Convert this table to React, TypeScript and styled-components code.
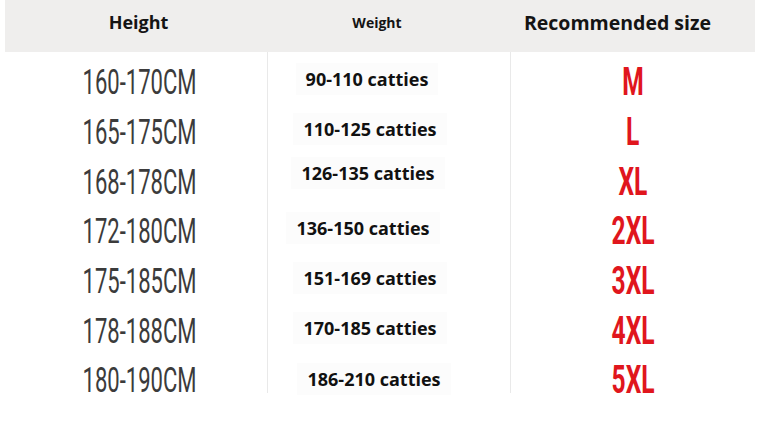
import React from "react";
import styled, { createGlobalStyle } from "styled-components";

const GlobalStyle = createGlobalStyle`
  html, body { margin: 0; padding: 0; background: #ffffff; }
  * { box-sizing: border-box; }
`;

const Page = styled.div`
  width: 760px;
  height: 423px;
  padding: 0 5px;
  background: #ffffff;
  overflow: hidden;
`;

const HeaderBar = styled.div`
  display: grid;
  grid-template-columns: 262px 244px 244px;
  height: 52px;
  background: #efeeed;
`;

const HeadCell = styled.div<{ $size: number; $offset: number }>`
  display: flex;
  align-items: center;
  justify-content: center;
  padding-bottom: 8px;
  padding-left: ${(p) => Math.max(0, p.$offset * 2)}px;
  padding-right: ${(p) => Math.max(0, -p.$offset * 2)}px;
  font-family: "Open Sans", "Liberation Sans", sans-serif;
  font-weight: 700;
  font-size: ${(p) => p.$size}px;
  color: #141414;
  white-space: nowrap;
`;

const Body = styled.div`
  display: grid;
  grid-template-columns: 262px 244px 244px;
  grid-template-rows: 341px;
`;

const Column = styled.div<{ $divided?: boolean }>`
  display: flex;
  flex-direction: column;
  height: 100%;
  min-height: 0;
  padding-top: 6px;
  border-left: ${(p) => (p.$divided ? "1px solid #e9e9e9" : "none")};
  border-right: ${(p) => (p.$divided ? "1px solid #e9e9e9" : "none")};
`;

const Cell = styled.div<{ $padLeft?: number; $padRight?: number }>`
  height: 49.7px;
  flex: none;
  display: flex;
  align-items: center;
  justify-content: center;
  padding-left: ${(p) => p.$padLeft ?? 0}px;
  padding-right: ${(p) => p.$padRight ?? 0}px;
`;

const HeightText = styled.span`
  display: inline-block;
  font-family: Roboto, "Liberation Sans", sans-serif;
  font-weight: 400;
  font-size: 35px;
  line-height: 1;
  color: #3b3b3b;
  transform: scaleX(0.63);
  transform-origin: center;
  white-space: nowrap;
`;

const WeightText = styled.span<{ $dx: number; $dy: number }>`
  display: inline-block;
  padding: 6px 10px;
  background: #fcfcfc;
  font-family: "Open Sans", "Liberation Sans", sans-serif;
  font-weight: 700;
  font-size: 18px;
  line-height: 20px;
  color: #111111;
  white-space: nowrap;
  transform: translate(${(p) => p.$dx}px, ${(p) => p.$dy}px);
`;

const SizeText = styled.span`
  display: inline-block;
  font-family: Roboto, "Liberation Sans", sans-serif;
  font-weight: 700;
  font-size: 39px;
  line-height: 1;
  color: #e0161d;
  transform: scaleX(0.63);
  transform-origin: center;
  white-space: nowrap;
`;

type Row = { h: string; w: string; wx: number; wy: number; s: string };

const rows: Row[] = [
  { h: "160-170CM", w: "90-110 catties", wx: -1, wy: -4, s: "M" },
  { h: "165-175CM", w: "110-125 catties", wx: 2, wy: -4, s: "L" },
  { h: "168-178CM", w: "126-135 catties", wx: 0, wy: -9, s: "XL" },
  { h: "172-180CM", w: "136-150 catties", wx: -5, wy: -4, s: "2XL" },
  { h: "175-185CM", w: "151-169 catties", wx: 2, wy: -4, s: "3XL" },
  { h: "178-188CM", w: "170-185 catties", wx: 2, wy: -3, s: "4XL" },
  { h: "180-190CM", w: "186-210 catties", wx: 6, wy: -2, s: "5XL" },
];

export default function App() {
  return (
    <>
      <GlobalStyle />
      <Page>
        <HeaderBar>
          <HeadCell $size={18} $offset={2.5}>Height</HeadCell>
          <HeadCell $size={14} $offset={-12}>Weight</HeadCell>
          <HeadCell $size={19.5} $offset={-15.5}>Recommended size</HeadCell>
        </HeaderBar>
        <Body>
          <Column>
            {rows.map((r) => (
              <Cell key={r.h} $padLeft={8}>
                <HeightText>{r.h}</HeightText>
              </Cell>
            ))}
          </Column>
          <Column $divided>
            {rows.map((r) => (
              <Cell key={r.w} $padRight={42}>
                <WeightText $dx={r.wx} $dy={r.wy}>{r.w}</WeightText>
              </Cell>
            ))}
          </Column>
          <Column>
            {rows.map((r) => (
              <Cell key={r.s}>
                <SizeText>{r.s}</SizeText>
              </Cell>
            ))}
          </Column>
        </Body>
      </Page>
    </>
  );
}
